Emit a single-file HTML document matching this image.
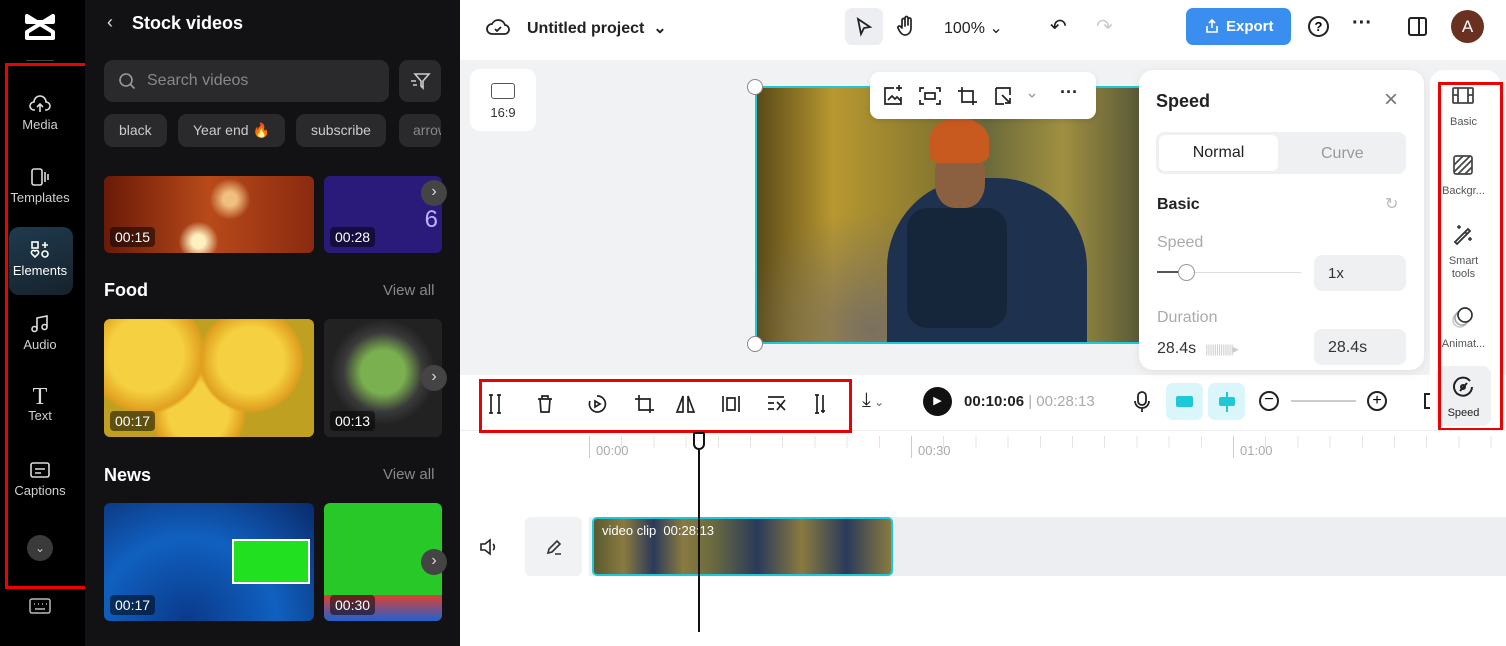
<!DOCTYPE html>
<html><head><meta charset="utf-8"><style>
*{box-sizing:border-box;margin:0;padding:0}
body{width:1506px;height:646px;overflow:hidden;font-family:"Liberation Sans",sans-serif;background:#fff;position:relative}
.a{position:absolute}
.rail{left:0;top:0;width:85px;height:646px;background:#000}
.ri{position:absolute;left:0;width:80px;text-align:center;color:#d0d0d0;font-size:13px}
.ri svg{display:block;margin:0 auto 3px}
.panel{left:85px;top:0;width:375px;height:646px;background:#121214}
.chip{position:absolute;top:114px;height:33px;border-radius:9px;background:#2a2a2d;color:#ccc;font-size:14px;line-height:33px;padding:0 15px}
.th{position:absolute;border-radius:6px;overflow:hidden}
.dur{position:absolute;left:6px;bottom:6px;background:rgba(0,0,0,.5);color:#fff;font-size:14px;padding:2px 5px;border-radius:4px}
.nx{position:absolute;width:26px;height:26px;border-radius:13px;background:#444;color:#ddd;font-size:16px;text-align:center;line-height:24px}
.h{position:absolute;color:#fff;font-size:18px;font-weight:bold}
.va{position:absolute;color:#888;font-size:15px}
.red{position:absolute;border:3px solid #e00}
.tb svg{position:absolute}
.rp{position:absolute;left:1437px;width:53px;text-align:center;font-size:11px;color:#555;line-height:13px}
</style></head><body>
<div class="a rail">
 <svg class="a" style="left:24px;top:12px" width="32" height="30" viewBox="0 0 32 30" fill="none" stroke="#fff" stroke-width="4" stroke-linejoin="round"><path d="M3 4l26 16v6H3v-6L29 4v6H3z"/></svg>
 <div class="a" style="left:26px;top:60px;width:28px;height:1px;background:#444"></div>
 <div class="ri" style="top:94px"><svg width="22" height="20" viewBox="0 0 22 20" fill="none" stroke="#ddd" stroke-width="1.6"><path d="M6 16H5a4 4 0 0 1 0-8 6 6 0 0 1 12 0 4 4 0 0 1 0 8h-1M11 18v-8M8 13l3-3 3 3"/></svg>Media</div>
 <div class="ri" style="top:167px"><svg width="22" height="20" viewBox="0 0 22 20" fill="none" stroke="#ddd" stroke-width="1.6"><rect x="3" y="2" width="10" height="16" rx="2"/><path d="M16 5v10M19 7v6"/></svg>Templates</div>
 <div class="a" style="left:9px;top:227px;width:64px;height:68px;border-radius:10px;background:linear-gradient(160deg,#1f3a4e,#16222c)"></div>
 <div class="ri" style="top:240px;color:#fff"><svg width="22" height="20" viewBox="0 0 22 20" fill="none" stroke="#fff" stroke-width="1.6"><rect x="3" y="2" width="6" height="6"/><path d="M13 5h6M16 2v6"/><path d="M6 17l-3-3a2 2 0 0 1 3-3 2 2 0 0 1 3 3z"/><circle cx="16" cy="14" r="3"/></svg>Elements</div>
 <div class="ri" style="top:314px"><svg width="22" height="20" viewBox="0 0 22 20" fill="none" stroke="#ddd" stroke-width="1.6"><path d="M8 15V4l10-2v11"/><circle cx="5.5" cy="15" r="2.5"/><circle cx="15.5" cy="13" r="2.5"/></svg>Audio</div>
 <div class="ri" style="top:386px"><div style="font-size:24px;line-height:22px;font-family:'Liberation Serif';color:#ddd">T</div>Text</div>
 <div class="ri" style="top:460px"><svg width="22" height="20" viewBox="0 0 22 20" fill="none" stroke="#ddd" stroke-width="1.6"><rect x="2" y="3" width="18" height="14" rx="2"/><path d="M6 9h10M6 13h6"/></svg>Captions</div>
 <div class="a" style="left:27px;top:535px;width:26px;height:26px;border-radius:13px;background:#3a3a3a;color:#ccc;text-align:center;font-size:12px;line-height:26px">&#8964;</div>
 <svg class="a" style="left:28px;top:597px" width="24" height="18" viewBox="0 0 24 18" fill="none" stroke="#bbb" stroke-width="1.5"><rect x="2" y="2" width="20" height="14" rx="2"/><path d="M6 7h1M10 7h1M14 7h1M18 7h1M7 12h10"/></svg>
</div>
<div class="red" style="left:5px;top:63px;width:86px;height:526px"></div>

<div class="a panel">
 <div class="a" style="left:22px;top:12px;color:#ddd;font-size:18px">&#8249;</div>
 <div class="a" style="left:47px;top:13px;color:#fff;font-size:18px;font-weight:bold">Stock videos</div>
 <div class="a" style="left:19px;top:60px;width:285px;height:42px;background:#2a2a2d;border-radius:9px"></div>
 <svg class="a" style="left:33px;top:72px" width="18" height="18" viewBox="0 0 18 18" fill="none" stroke="#999" stroke-width="1.6"><circle cx="8" cy="8" r="6"/><path d="M12.5 12.5l4 4"/></svg>
 <div class="a" style="left:62px;top:72px;color:#888;font-size:16px">Search videos</div>
 <div class="a" style="left:314px;top:60px;width:42px;height:42px;background:#2a2a2d;border-radius:9px"></div>
 <svg class="a" style="left:324px;top:71px" width="22" height="20" viewBox="0 0 22 20" fill="none" stroke="#ccc" stroke-width="1.6"><path d="M6 3h14l-6 7v7l-2-2v-5zM2 10h5M4 14h4"/></svg>
 <div class="chip" style="left:19px">black</div>
 <div class="chip" style="left:93px">Year end <span style="color:#f70">&#128293;</span></div>
 <div class="chip" style="left:211px">subscribe</div>
 <div class="chip" style="left:314px;width:42px;overflow:hidden;padding:0 0 0 14px;color:#888">arrow</div>
 <div class="th" style="left:19px;top:176px;width:210px;height:77px;background:radial-gradient(circle at 60% 30%,#f0c080 5%,transparent 15%),radial-gradient(circle at 45% 85%,#fff0c0 5%,transparent 15%),linear-gradient(90deg,#6a1a08,#b84a1a,#8a2a10)"><div class="dur">00:15</div></div>
 <div class="th" style="left:239px;top:176px;width:118px;height:77px;background:#2a1a7a"><div class="dur">00:28</div><div style="position:absolute;right:4px;top:30px;color:#c0b0ff;font-size:24px">6</div></div>
 <div class="nx" style="left:336px;top:180px">&#8250;</div>
 <div class="h" style="left:19px;top:280px">Food</div><div class="va" style="left:298px;top:282px">View all</div>
 <div class="th" style="left:19px;top:319px;width:210px;height:118px;background:radial-gradient(circle at 20% 30%,#f5d040 20%,#e0a020 30%,transparent 32%),radial-gradient(circle at 70% 35%,#f5d040 20%,#e0a020 30%,transparent 32%),radial-gradient(circle at 45% 80%,#f5d040 20%,#e0a020 30%,transparent 32%),#c0a020"><div class="dur">00:17</div></div>
 <div class="th" style="left:239px;top:319px;width:118px;height:118px;background:radial-gradient(circle at 50% 45%,#7ab050 25%,#3a3a3a 45%,#222 60%)"><div class="dur">00:13</div></div>
 <div class="nx" style="left:336px;top:365px">&#8250;</div>
 <div class="h" style="left:19px;top:465px">News</div><div class="va" style="left:298px;top:466px">View all</div>
 <div class="th" style="left:19px;top:503px;width:210px;height:118px;background:radial-gradient(ellipse at 40% 100%,#0a3a8a,#1060c0 50%,#0a2a6a)"><div style="position:absolute;left:128px;top:36px;width:78px;height:45px;background:#20e020;border:2px solid #fff"></div><div class="dur">00:17</div></div>
 <div class="th" style="left:239px;top:503px;width:118px;height:118px;background:#28c828"><div style="position:absolute;left:0;bottom:0;width:100%;height:26px;background:linear-gradient(#e04030,#2060d0)"></div><div class="dur">00:30</div></div>
 <div class="nx" style="left:336px;top:549px">&#8250;</div>
</div>
<div class="a" style="left:460px;top:290px;width:8px;height:60px;background:#2a2a2a;border-radius:0 4px 4px 0"></div>

<!-- top bar -->
<svg class="a" style="left:486px;top:16px" width="24" height="22" viewBox="0 0 24 22" fill="none" stroke="#222" stroke-width="1.8"><path d="M7 18H6a5 5 0 0 1 0-10 7 7 0 0 1 13 1 4.5 4.5 0 0 1-1 9z"/><path d="M9 13l2 2 4-4"/></svg>
<div class="a" style="left:527px;top:18px;font-size:16px;font-weight:bold;color:#222">Untitled project &nbsp;&#8964;</div>
<div class="a" style="left:845px;top:8px;width:38px;height:37px;border-radius:7px;background:#eceef1"></div>
<svg class="a" style="left:855px;top:17px" width="18" height="20" viewBox="0 0 18 20" fill="none" stroke="#222" stroke-width="1.8"><path d="M3 2l12 8-6 1-3 6z"/></svg>
<svg class="a" style="left:895px;top:15px" width="22" height="22" viewBox="0 0 22 22" fill="none" stroke="#222" stroke-width="1.7" stroke-linecap="round"><path d="M7 12V5a1.5 1.5 0 0 1 3 0v6M10 10V3a1.5 1.5 0 0 1 3 0v7M13 10V4.5a1.5 1.5 0 0 1 3 0V13c0 4-2.5 7-6 7-2.5 0-4-1.5-5.5-4L3 13a1.5 1.5 0 0 1 2.5-1.5L7 13"/></svg>
<div class="a" style="left:944px;top:18px;font-size:16px;color:#222">100% &#8964;</div>
<div class="a" style="left:1050px;top:14px;font-size:20px;color:#222">&#8630;</div>
<div class="a" style="left:1096px;top:14px;font-size:20px;color:#ccc">&#8631;</div>
<div class="a" style="left:1186px;top:8px;width:105px;height:37px;border-radius:7px;background:#3a8ef0;color:#fff;font-size:15px;font-weight:bold;line-height:37px;padding-left:40px">Export</div>
<svg class="a" style="left:1204px;top:18px" width="16" height="16" viewBox="0 0 16 16" fill="none" stroke="#fff" stroke-width="1.6"><path d="M3 8v6h10V8M8 10V2M5 5l3-3 3 3"/></svg>
<div class="a" style="left:1308px;top:16px;width:21px;height:21px;border:2px solid #222;border-radius:50%;text-align:center;font-size:13px;font-weight:bold;line-height:17px">?</div>
<div class="a" style="left:1352px;top:12px;font-size:20px;font-weight:bold;color:#222">&middot;&middot;&middot;</div>
<div class="a" style="left:1408px;top:17px;width:19px;height:19px;border:2px solid #222;border-radius:3px"><div style="position:absolute;left:8px;top:0;width:2px;height:15px;background:#222"></div></div>
<div class="a" style="left:1451px;top:10px;width:33px;height:33px;border-radius:50%;background:#6a3020;color:#fff;text-align:center;line-height:33px;font-size:17px">A</div>

<!-- canvas area -->
<div class="a" style="left:460px;top:60px;width:1046px;height:315px;background:#f1f2f4"></div>
<div class="a" style="left:470px;top:69px;width:66px;height:62px;background:#fff;border-radius:10px"><div style="position:absolute;left:21px;top:14px;width:24px;height:16px;border:1.5px solid #555;border-radius:3px"></div><div style="position:absolute;top:36px;width:100%;text-align:center;font-size:13px;color:#333">16:9</div></div>
<div class="a" style="left:755px;top:86px;width:386px;height:258px;border:2px solid #1ec8d8;overflow:hidden;background:radial-gradient(ellipse at 30% 95%,#7a7060,transparent 35%),linear-gradient(90deg,#5a4a18,#b89830 20%,#8a7a30 45%,#6a6a3a 60%,#a09040 80%,#5a5a38)">
 <div style="position:absolute;left:130px;top:90px;width:200px;height:200px;border-radius:45% 45% 0 0;background:#1e3250"></div>
 <div style="position:absolute;left:150px;top:120px;width:100px;height:120px;border-radius:20px;background:#15253a"></div>
 <div style="position:absolute;left:178px;top:60px;width:50px;height:60px;border-radius:40%;background:#8a6040"></div>
 <div style="position:absolute;left:172px;top:30px;width:60px;height:45px;border-radius:50% 50% 20% 20%;background:#c85a20"></div>
</div>
<div class="a" style="left:747px;top:79px;width:16px;height:16px;border-radius:50%;background:#fff;border:1px solid #888"></div>
<div class="a" style="left:747px;top:336px;width:16px;height:16px;border-radius:50%;background:#fff;border:1px solid #888"></div>
<div class="a" style="left:870px;top:72px;width:226px;height:47px;background:#fff;border-radius:9px;box-shadow:0 2px 6px rgba(0,0,0,.1)">
<svg style="position:absolute;left:12px;top:13px" width="200" height="22" viewBox="0 0 200 22" fill="none" stroke="#222" stroke-width="1.7">
<path d="M12 3H3v16h16v-7M14 3h6M17 0v6M6 15l4-4 3 3 2-2 4 4"/>
<path d="M42 3h-4v4M54 3h4v4M42 19h-4v-4M54 19h4v-4M43 8h10v6H43z"/>
<path d="M80 2v15h15M76 6h15v14"/>
<path d="M114 3h14v7M114 3v16h8M120 10l8 8M128 13v5h-5"/>
<path d="M147 9l3 3 3-3" stroke="#999" stroke-width="1.3"/>
</svg>
<div style="position:absolute;left:190px;top:10px;font-size:18px;font-weight:bold;color:#222">&middot;&middot;&middot;</div></div>
<div class="a" style="left:1139px;top:70px;width:285px;height:300px;background:#fff;border-radius:14px;box-shadow:0 2px 10px rgba(0,0,0,.08)">
 <div class="a" style="left:17px;top:21px;font-size:18px;font-weight:bold;color:#222">Speed</div>
 <div class="a" style="left:245px;top:16px;font-size:24px;color:#777">&times;</div>
 <div class="a" style="left:17px;top:62px;width:250px;height:42px;background:#eff0f2;border-radius:8px"></div>
 <div class="a" style="left:20px;top:65px;width:119px;height:36px;background:#fff;border-radius:6px;text-align:center;line-height:36px;font-size:16px;color:#222">Normal</div>
 <div class="a" style="left:182px;top:75px;font-size:16px;color:#999">Curve</div>
 <div class="a" style="left:18px;top:126px;font-size:16px;font-weight:bold;color:#222">Basic</div>
 <div class="a" style="left:246px;top:124px;font-size:16px;color:#bbb">&#8635;</div>
 <div class="a" style="left:18px;top:164px;font-size:16px;color:#aaa">Speed</div>
 <div class="a" style="left:18px;top:202px;width:144px;height:1px;background:#ddd"></div>
 <div class="a" style="left:18px;top:201px;width:30px;height:2px;background:#555"></div>
 <div class="a" style="left:39px;top:194px;width:17px;height:17px;border-radius:50%;background:#fff;border:1px solid #999"></div>
 <div class="a" style="left:175px;top:185px;width:92px;height:36px;background:#eff0f2;border-radius:8px;padding:10px 14px;font-size:15px;color:#333">1x</div>
 <div class="a" style="left:18px;top:239px;font-size:16px;color:#aaa">Duration</div>
 <div class="a" style="left:18px;top:270px;font-size:16px;color:#333">28.4s <span style="color:#ccc;font-size:12px;letter-spacing:-1px">&nbsp;&nbsp;|||||||||||||&#9656;</span></div>
 <div class="a" style="left:175px;top:259px;width:92px;height:36px;background:#eff0f2;border-radius:8px;padding:10px 14px;font-size:16px;color:#333">28.4s</div>
</div>
<div class="a" style="left:1430px;top:70px;width:70px;height:360px;background:#fff;border-radius:14px"></div>
<div class="a" style="left:1436px;top:366px;width:55px;height:60px;background:#eef0f2;border-radius:8px"></div>
<svg class="a" style="left:1452px;top:87px" width="22" height="18" viewBox="0 0 22 18" fill="none" stroke="#444" stroke-width="1.8"><rect x="1" y="1" width="20" height="15" rx="1"/><path d="M6 1v15M16 1v15M1 8h5M16 8h5"/></svg>
<div class="rp" style="top:116px">Basic</div>
<svg class="a" style="left:1453px;top:155px" width="20" height="20" viewBox="0 0 20 20" fill="none" stroke="#444" stroke-width="1.7"><rect x="1" y="1" width="18" height="18" rx="2"/><path d="M1 10l9-9M1 17L17 1M5 19L19 5M12 19l7-7"/></svg>
<div class="rp" style="top:185px">Backgr...</div>
<svg class="a" style="left:1451px;top:223px" width="24" height="24" viewBox="0 0 24 24" fill="none" stroke="#333" stroke-width="1.8"><path d="M17 6L4 19l2 2L19 8zM14 9l2 2"/><path d="M8 2v4M6 4h4M19 14v4M17 16h4" stroke-width="1.5"/></svg>
<div class="rp" style="top:255px">Smart<br>tools</div>
<svg class="a" style="left:1451px;top:305px" width="24" height="24" viewBox="0 0 24 24" fill="none" stroke-width="1.7"><circle cx="9" cy="15" r="7" stroke="#ccc"/><circle cx="11" cy="13" r="7" stroke="#aaa"/><circle cx="14" cy="10" r="7" stroke="#333" fill="#fff"/></svg>
<div class="rp" style="top:338px">Animat...</div>
<svg class="a" style="left:1452px;top:376px" width="22" height="22" viewBox="0 0 22 22" fill="none" stroke="#222" stroke-width="2"><path d="M18 5a9 9 0 1 0 2 6"/><path d="M8 15l7-8"/><circle cx="11" cy="11" r="2"/></svg>
<div class="rp" style="top:407px;color:#222">Speed</div>
<div class="red" style="left:1438px;top:82px;width:65px;height:349px"></div>

<!-- toolbar -->
<div class="a" style="left:460px;top:430px;width:1046px;height:1px;background:#eee"></div>
<div class="a tb" style="left:479px;top:380px;width:372px;height:52px">
<svg style="left:8px;top:12px" width="340" height="24" viewBox="0 0 340 24" fill="none" stroke="#222" stroke-width="1.7">
<path d="M2 3h4M2 21h4M4 3v18M10 3h4M10 21h4M12 3v18"/>
<path d="M51 7h14M55 7V4h6v3M53 7l1 13h8l1-13"/>
<path d="M110 4a8 8 0 1 1-7 5M108 9l5 3-5 3z"/>
<path d="M152 3v15h15M148 7h15v14"/>
<path d="M196 4v16h-6zM201 4v16h6z"/>
<path d="M240 6h8v12h-8zM236 4v16M252 4v16"/>
<path d="M281 5h16M281 11h6M281 17h6M290 18l8-10M290 10l8 8"/>
<path d="M328 3h4M330 3v18M328 21h4M336 3v14M334 19h4M336 17v4"/>
</svg></div>
<div class="red" style="left:479px;top:379px;width:373px;height:54px"></div>
<div class="a" style="left:862px;top:389px;font-size:20px;color:#222">&#10515;<span style="font-size:12px;color:#666"> &#8964;</span></div>
<div class="a" style="left:923px;top:387px;width:29px;height:29px;border-radius:50%;background:#111;color:#fff;font-size:11px;text-align:center;line-height:29px">&#9654;</div>
<div class="a" style="left:964px;top:393px;font-size:15px;font-weight:bold;color:#222">00:10:06 <span style="font-weight:normal;color:#aaa">| 00:28:13</span></div>
<svg class="a" style="left:1132px;top:390px" width="20" height="24" viewBox="0 0 20 24" fill="none" stroke="#222" stroke-width="1.8"><rect x="6" y="2" width="8" height="13" rx="4"/><path d="M3 11a7 7 0 0 0 14 0M10 18v4"/></svg>
<div class="a" style="left:1166px;top:383px;width:37px;height:37px;border-radius:7px;background:#dbf6fa"><div style="position:absolute;left:10px;top:13px;width:17px;height:11px;background:#1ec8d8;border-radius:2px"></div></div>
<div class="a" style="left:1208px;top:383px;width:37px;height:37px;border-radius:7px;background:#dbf6fa"><div style="position:absolute;left:18px;top:9px;width:2px;height:20px;background:#1ec8d8"></div><div style="position:absolute;left:11px;top:14px;width:16px;height:9px;background:#1ec8d8;border-radius:2px"></div></div>
<div class="a" style="left:1259px;top:391px;width:20px;height:20px;border:2px solid #222;border-radius:50%;text-align:center;line-height:14px;font-size:16px">&minus;</div>
<div class="a" style="left:1291px;top:400px;width:65px;height:2px;background:#ccc"></div>
<div class="a" style="left:1367px;top:391px;width:20px;height:20px;border:2px solid #222;border-radius:50%;text-align:center;line-height:15px;font-size:16px">+</div>
<div class="a" style="left:1424px;top:393px;width:6px;height:16px;border:2px solid #222;border-right:none"></div>

<!-- timeline -->
<div class="a" style="left:589px;top:436px;width:917px;height:12px;background:repeating-linear-gradient(90deg,#e4e4e4 0 1px,transparent 1px 32.2px)"></div>
<div class="a" style="left:589px;top:436px;width:1px;height:22px;background:#ccc"></div>
<div class="a" style="left:911px;top:436px;width:1px;height:22px;background:#ccc"></div>
<div class="a" style="left:1233px;top:436px;width:1px;height:22px;background:#ccc"></div>
<div class="a" style="left:596px;top:443px;font-size:13px;color:#aaa">00:00</div>
<div class="a" style="left:918px;top:443px;font-size:13px;color:#aaa">00:30</div>
<div class="a" style="left:1240px;top:443px;font-size:13px;color:#aaa">01:00</div>
<svg class="a" style="left:479px;top:538px" width="20" height="18" viewBox="0 0 20 18" fill="none" stroke="#222" stroke-width="1.6"><path d="M2 6h4l5-4v14l-5-4H2zM14 6a4 4 0 0 1 0 6"/></svg>
<div class="a" style="left:525px;top:517px;width:57px;height:59px;background:#f1f2f4;border-radius:6px"></div>
<svg class="a" style="left:545px;top:538px" width="18" height="18" viewBox="0 0 18 18" fill="none" stroke="#333" stroke-width="1.6"><path d="M3 15l1-4 8-8 3 3-8 8zM10 16h6"/></svg>
<div class="a" style="left:589px;top:517px;width:917px;height:59px;background:#eceef1"></div>
<div class="a" style="left:592px;top:517px;width:301px;height:59px;border:2px solid #1ec8d8;border-radius:5px;background:linear-gradient(90deg,#5a5a30,#8a7a40 10%,#2a3a5a 20%,#8a7a40 30%,#6a6a40 40%,#2a3a5a 55%,#8a7a40 70%,#2a3a5a 85%,#8a7a40)"><div style="position:absolute;left:8px;top:4px;color:#fff;font-size:13px">video clip &nbsp;00:28:13</div></div>
<div class="a" style="left:698px;top:450px;width:2px;height:182px;background:#111"></div>
<div class="a" style="left:693px;top:432px;width:12px;height:18px;border:2px solid #111;border-radius:2px 2px 6px 6px;background:#fff"></div>
</body></html>
